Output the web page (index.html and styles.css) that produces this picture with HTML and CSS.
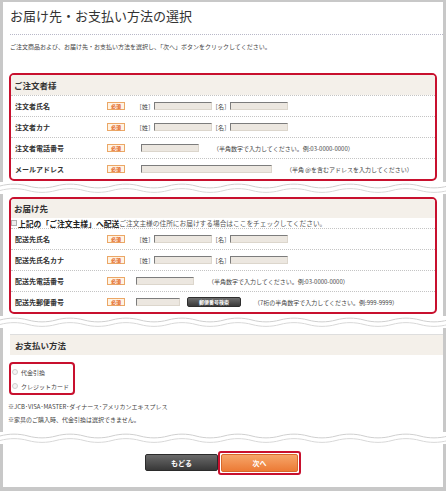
FILE: index.html
```html
<!DOCTYPE html>
<html lang="ja">
<head>
    <meta charset="UTF-8">
    <meta name="viewport" content="width=device-width, initial-scale=1.0">
    <title>お届け先・お支払い方法の選択</title>
    <link rel="stylesheet" href="styles.css">
</head>
<body>
    <div class="sheet sheet-top">
        <h1 class="page-title">お届け先・お支払い方法の選択</h1>
        <p class="lead">ご注文商品および、お届け先・お支払い方法を選択し、「次へ」ボタンをクリックしてください。</p>

        <div class="box">
            <div class="box-head">ご注文者様</div>
            <div class="row">
                <span class="label">注文者氏名</span>
                <span class="must">必須</span>
                <span class="field">
                    <span class="tag">［姓］</span><input type="text" class="inp inp-name">
                    <span class="tag">［名］</span><input type="text" class="inp inp-name">
                </span>
            </div>
            <div class="row">
                <span class="label">注文者カナ</span>
                <span class="must">必須</span>
                <span class="field">
                    <span class="tag">［姓］</span><input type="text" class="inp inp-name">
                    <span class="tag">［名］</span><input type="text" class="inp inp-name">
                </span>
            </div>
            <div class="row">
                <span class="label">注文者電話番号</span>
                <span class="must">必須</span>
                <span class="field field-indent">
                    <input type="text" class="inp inp-tel">
                    <span class="note">（半角数字で入力してください。例:03-0000-0000）</span>
                </span>
            </div>
            <div class="row">
                <span class="label">メールアドレス</span>
                <span class="must">必須</span>
                <span class="field field-indent">
                    <input type="text" class="inp inp-mail">
                    <span class="note">（半角 @を含むアドレスを入力してください）</span>
                </span>
            </div>
        </div>
    </div>

    <div class="tear">
        <svg width="100%" height="12">
            <defs>
                <pattern id="tear-line" width="56" height="12" patternUnits="userSpaceOnUse">
                    <path d="M0 4 C9 1.5 19 1.5 28 4 S47 6.5 56 4" fill="none" stroke="#cfcfcf" stroke-width="1"/>
                    <path d="M0 8.5 C9 6 19 6 28 8.5 S47 11 56 8.5" fill="none" stroke="#d8d8d8" stroke-width="1"/>
                </pattern>
            </defs>
            <rect width="100%" height="12" fill="url(#tear-line)"/>
        </svg>
    </div>

    <div class="sheet sheet-mid">
        <div class="box">
            <div class="box-head box-head-short">お届け先</div>
            <label class="check-row">
                <span class="check"></span>
                <span class="check-main">上記の「ご注文主様」へ配送</span>
                <span class="check-sub">ご注文主様の住所にお届けする場合はここをチェックしてください。</span>
            </label>
            <div class="row">
                <span class="label">配送先氏名</span>
                <span class="must">必須</span>
                <span class="field">
                    <span class="tag">［姓］</span><input type="text" class="inp inp-name">
                    <span class="tag">［名］</span><input type="text" class="inp inp-name">
                </span>
            </div>
            <div class="row">
                <span class="label">配送先氏名カナ</span>
                <span class="must">必須</span>
                <span class="field">
                    <span class="tag">［姓］</span><input type="text" class="inp inp-name">
                    <span class="tag">［名］</span><input type="text" class="inp inp-name">
                </span>
            </div>
            <div class="row">
                <span class="label">配送先電話番号</span>
                <span class="must">必須</span>
                <span class="field">
                    <input type="text" class="inp inp-tel">
                    <span class="note">（半角数字で入力してください。例:03-0000-0000）</span>
                </span>
            </div>
            <div class="row">
                <span class="label">配送先郵便番号</span>
                <span class="must">必須</span>
                <span class="field">
                    <input type="text" class="inp inp-zip">
                    <button type="button" class="btn-zip">郵便番号検索</button>
                    <span class="note note-zip">（7桁の半角数字で入力してください。例:999-9999）</span>
                </span>
            </div>
        </div>
    </div>

    <div class="tear">
        <svg width="100%" height="12"><rect width="100%" height="12" fill="url(#tear-line)"/></svg>
    </div>

    <div class="sheet sheet-pay">
        <div class="pay-head">お支払い方法</div>
        <div class="pay-box">
            <label class="pay-opt"><span class="radio"></span>代金引換</label>
            <label class="pay-opt"><span class="radio"></span>クレジットカード</label>
        </div>
        <p class="pay-note">※JCB･VISA･MASTER･ダイナース･アメリカンエキスプレス</p>
        <p class="pay-note pay-note-2">※家具のご購入時、代金引換は選択できません。</p>
    </div>

    <div class="tear">
        <svg width="100%" height="12"><rect width="100%" height="12" fill="url(#tear-line)"/></svg>
    </div>

    <div class="sheet sheet-foot">
        <button type="button" class="btn-back">もどる</button>
        <span class="next-frame"><button type="button" class="btn-next">次へ</button></span>
    </div>
</body>
</html>
```

FILE: styles.css
```css
body {
    margin: 0;
    padding: 2px 0 4px;
    background: #c8c8c8;
    font-family: "Noto Sans CJK JP", "Noto Sans", sans-serif;
    color: #333;
}
.sheet {
    background: #fff;
    margin: 0 3px;
}
.tear {
    background: #fff;
    height: 12px;
}
.tear svg {
    display: block;
}

/* top part */
.sheet-top {
    padding-bottom: 1px;
}
.page-title {
    margin: 0 0 0 7px;
    padding: 6px 0 10px;
    font-size: 13px;
    line-height: 16px;
    font-weight: normal;
    color: #333;
    border-bottom: 1px dotted #b8b8c8;
}
.lead {
    margin: 8px 0 0 7px;
    font-size: 6px;
    line-height: 8px;
    color: #444;
}
.box {
    margin: 22px 6px 0;
    border: 2px solid #c8102e;
    border-radius: 5px;
    overflow: hidden;
}
.box-head {
    height: 20px;
    line-height: 20px;
    padding-left: 3px;
    background: #f4f0ea;
    font-size: 8.5px;
    font-weight: bold;
    color: #333;
}
.box-head-short {
    height: 19px;
    line-height: 19px;
}
.row {
    display: flex;
    align-items: center;
    height: 21px;
    box-sizing: border-box;
    border-top: 1px dotted #c4c4c4;
}
.label {
    width: 92px;
    padding-left: 4px;
    font-size: 7px;
    font-weight: bold;
    color: #333;
}
.must {
    width: 18px;
    height: 8px;
    box-sizing: border-box;
    border: 1px solid #eba766;
    background: #fff3e4;
    color: #e05a10;
    font-size: 5px;
    font-weight: bold;
    line-height: 6px;
    text-align: center;
}
.field {
    display: flex;
    align-items: center;
    margin-left: 11px;
}
.field-indent {
    margin-left: 16px;
}
.tag {
    font-size: 6px;
    color: #444;
}
.inp {
    height: 8px;
    padding: 0;
    margin: 0;
    box-sizing: border-box;
    border: 1px solid;
    border-color: #7c7c7c #dcd6cc #dcd6cc #7c7c7c;
    background: #ece7e0;
}
.inp-name {
    width: 58px;
}
.inp-tel {
    width: 58px;
}
.inp-mail {
    width: 131px;
}
.inp-zip {
    width: 44px;
}
.note {
    margin-left: 14px;
    font-size: 6px;
    color: #444;
    white-space: nowrap;
}
.note-zip {
    margin-left: 13px;
}
.btn-zip {
    margin-left: 7px;
    width: 54px;
    height: 10px;
    padding: 0;
    border: 1px solid #2e2e2e;
    border-radius: 2px;
    background: linear-gradient(#6e6e6e, #3a3a3a);
    color: #fff;
    font-family: inherit;
    font-size: 5px;
    font-weight: bold;
    line-height: 8px;
}

/* delivery */
.sheet-mid {
    padding: 3px 0 2px;
}
.sheet-mid .box {
    margin-top: 0;
}
.check-row {
    display: flex;
    align-items: center;
    height: 10px;
    white-space: nowrap;
}
.check {
    width: 4px;
    height: 4px;
    border: 1px solid #b0b0b0;
    background: #eee;
    margin-right: 1px;
}
.check-main {
    font-size: 7.8px;
    font-weight: bold;
    color: #222;
}
.check-sub {
    font-size: 6.7px;
    color: #555;
}

/* payment */
.sheet-pay {
    padding: 6px 0 8px;
}
.pay-head {
    margin-left: 7px;
    height: 21px;
    line-height: 20px;
    box-sizing: border-box;
    padding-left: 5px;
    border-top: 1px solid #dedede;
    background: #f4f0ea;
    font-size: 8.5px;
    font-weight: bold;
    color: #333;
}
.pay-box {
    margin: 7px 0 0 6px;
    width: 66px;
    height: 33px;
    box-sizing: border-box;
    padding-top: 1px;
    border: 2px solid #c8102e;
    border-radius: 4px;
}
.pay-opt {
    display: flex;
    align-items: center;
    height: 14px;
    font-size: 6px;
    color: #444;
}
.radio {
    width: 4px;
    height: 4px;
    margin: 0 3px 0 1px;
    border: 1px solid #cfcfcf;
    border-radius: 50%;
    background: #f5f5f5;
}
.pay-note {
    margin: 8px 0 0 5px;
    font-size: 6px;
    line-height: 8px;
    color: #444;
}
.pay-note-2 {
    margin-top: 5px;
}

/* buttons */
.sheet-foot {
    height: 43px;
    box-sizing: border-box;
    padding-top: 7px;
    display: flex;
    justify-content: center;
    align-items: flex-start;
}
.btn-back {
    margin-top: 3px;
    width: 73px;
    height: 17px;
    padding: 0;
    border: 1px solid #2b2b2b;
    border-radius: 2px;
    background: linear-gradient(#6a6a6a, #383838);
    color: #fff;
    font-family: inherit;
    font-size: 7px;
    font-weight: bold;
}
.next-frame {
    display: block;
    padding: 1px;
    border: 2px solid #c8102e;
    border-radius: 3px;
    background: #fff;
}
.btn-next {
    display: block;
    width: 77px;
    height: 18px;
    padding: 0;
    border: 1px solid #d8692a;
    border-radius: 2px;
    background: linear-gradient(#f6a66a, #ec7a35);
    color: #fff;
    font-family: inherit;
    font-size: 7px;
    font-weight: bold;
}
```
